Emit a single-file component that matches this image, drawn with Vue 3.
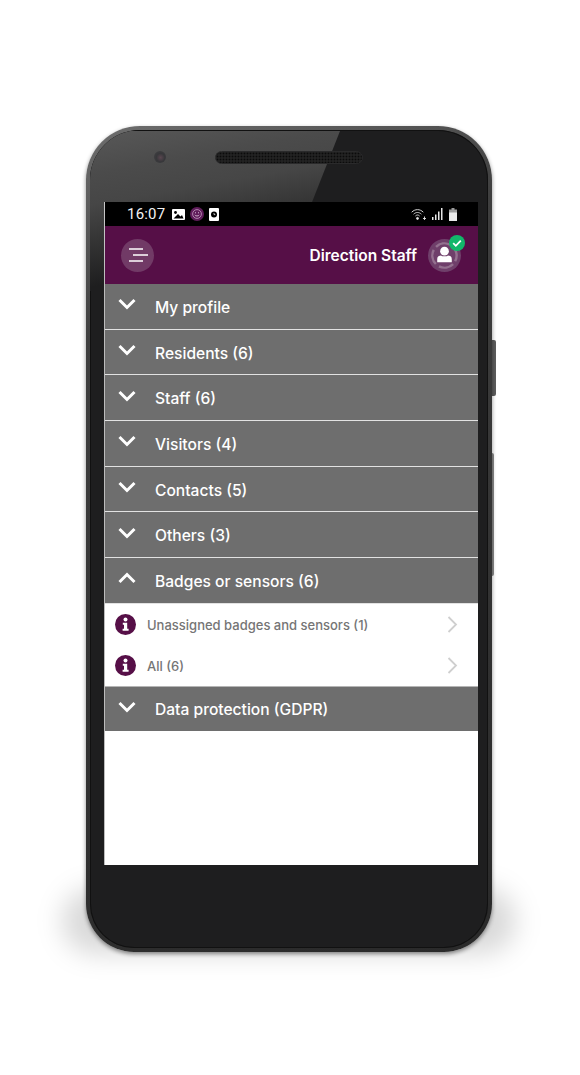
<script setup>
const topRows = ['My profile', 'Residents (6)', 'Staff (6)', 'Visitors (4)', 'Contacts (5)', 'Others (3)']
const subRows = ['Unassigned badges and sensors (1)', 'All (6)']
</script>

<template>
  <main class="stage">
    <div class="device">
      <span class="key key-power"></span>
      <span class="key key-volume"></span>
      <div class="phone">
        <div class="body">
          <span class="gloss"></span>
          <div class="bezel-top">
            <span class="camera"></span>
            <span class="speaker"></span>
          </div>
          <div class="screen">
            <div class="status">
              <span class="clock">16:07</span>
              <svg class="note" width="13" height="11" viewBox="0 0 13 11"><rect width="13" height="11" rx="1" fill="#fff"/><circle cx="3.500" cy="3.500" r="1.400"/><path d="M1.500 9.500 6 5l2.500 2.500L10 6l1.500 3.500z"/></svg>
              <svg class="note" width="14" height="14" viewBox="0 0 14 14"><circle cx="7" cy="7" r="7" fill="#5f1c5a"/><circle cx="7" cy="7" r="4.400" fill="none" stroke="#b98db5" stroke-width=".9"/><path d="M4.800 8c.8 1.300 3.600 1.300 4.400 0" fill="none" stroke="#d9bdd6" stroke-width=".9"/><path d="M5 5.800h1M8 5.800h1" stroke="#d9bdd6"/></svg>
              <svg class="note" width="10" height="13" viewBox="0 0 10 13"><rect width="10" height="13" rx="1" fill="#fff"/><circle cx="5" cy="6.500" r="3" fill="#000"/><path d="M5 5v1.600h1.300" stroke="#fff" stroke-width=".7" fill="none"/></svg>
              <span class="grow"></span>
              <svg width="16" height="13" viewBox="0 0 16 13" fill="none" stroke="#e8e8e8" stroke-width=".9"><path d="M.7 4.200C4 .8 9 .8 12.300 4.200M2.600 6.200c2.300-2.300 5.500-2.300 7.800 0M4.400 8c1.300-1.300 2.900-1.300 4.200 0"/><circle cx="6.500" cy="10.400" r="1" fill="#e8e8e8"/><path d="M13.500 8.500v3.500M12 10.500h3"/></svg>
              <svg class="signal" width="12" height="12" viewBox="0 0 12 12" fill="#e8e8e8"><rect x="0" y="9" width="1.500" height="3"/><rect x="3" y="6.500" width="1.500" height="5.500"/><rect x="6" y="3.500" width="1.500" height="8.500"/><rect x="9" y="0" width="1.500" height="12"/></svg>
              <svg class="battery" width="8" height="13" viewBox="0 0 8 13"><path d="M2.500 0h3v1.500H8V13H0V1.500h2.500z" fill="#9b9b9b"/><rect y="4.500" width="8" height="8.500" fill="#e9e9e9"/></svg>
            </div>
            <header class="bar">
              <button class="menu" aria-label="Menu">
                <svg width="20" height="16" viewBox="0 0 20 16" stroke="#fff" stroke-width="1.600"><path d="M1 2h14M5 8h15M1 14h14"/></svg>
              </button>
              <span class="user">Direction Staff</span>
              <span class="avatar">
                <svg width="33" height="33" viewBox="0 0 34 34">
                  <circle cx="17" cy="17" r="17" fill="#6f3f6a"/>
                  <circle cx="17" cy="17" r="12.500" fill="none" stroke="#94718f" stroke-width="2.500" stroke-dasharray="15.600 4" transform="rotate(45 17 17)"/>
                  <circle cx="17" cy="12.500" r="4.500" fill="#fff"/>
                  <path d="M9.500 24v-3.500c0-2.500 2-3.500 4-3.500 1 1.200 6 1.200 7 0 2 0 4 1 4 3.500V24z" fill="#fff"/>
                </svg>
                <svg class="check" width="16" height="16" viewBox="0 0 16 16"><circle cx="8" cy="8" r="8" fill="#12b76a"/><path d="M4.200 8.200l2.600 2.600 5-5.200" fill="none" stroke="#fff" stroke-width="1.800"/></svg>
              </span>
            </header>
            <div class="row" v-for="r in topRows" :key="r">
              <svg class="chev" width="20" height="12" viewBox="0 0 20 12"><path d="M2.500 2l7.500 7.500L17.500 2" fill="none" stroke="#fff" stroke-width="3"/></svg>
              <span class="label">{{ r }}</span>
            </div>
            <div class="row">
              <svg class="chev" width="20" height="12" viewBox="0 0 20 12"><path d="M2.500 10L10 2.500 17.500 10" fill="none" stroke="#fff" stroke-width="3"/></svg>
              <span class="label">Badges or sensors (6)</span>
            </div>
            <div class="subs">
              <div class="sub" v-for="s in subRows" :key="s">
                <svg class="info" width="21" height="21" viewBox="0 0 21 21"><circle cx="10.500" cy="10.500" r="10.500" fill="#560f47"/><circle cx="10.500" cy="5.500" r="2" fill="#fff"/><path d="M7.800 8.800h4.400v6h1.400v2H7.600v-2H9v-4H7.800z" fill="#fff"/></svg>
                <span class="sub-text">{{ s }}</span>
                <svg class="next" width="11" height="17" viewBox="0 0 11 17"><path d="M1.500 1l7.500 7.500L1.500 16" fill="none" stroke="#cfcfcf" stroke-width="1.800"/></svg>
              </div>
            </div>
            <div class="row last">
              <svg class="chev" width="20" height="12" viewBox="0 0 20 12"><path d="M2.500 2l7.500 7.500L17.500 2" fill="none" stroke="#fff" stroke-width="3"/></svg>
              <span class="label">Data protection (GDPR)</span>
            </div>
          </div>
        </div>
      </div>
    </div>
  </main>
</template>

<style>
html, body { margin: 0; background: #fff; }
</style>

<style scoped>
.stage {
  width: 580px;
  height: 1075px;
  padding: 126px 0 0 86px;
  box-sizing: border-box;
  overflow: hidden;
  background: #fff;
  font-family: Inter, "Noto Sans", sans-serif;
}
.device {
  position: relative;
  width: 406px;
  height: 826px;
}
.device::before {
  content: "";
  position: absolute;
  left: -24px;
  right: -24px;
  bottom: -2px;
  height: 66px;
  border-radius: 40px;
  background: rgba(0, 0, 0, .15);
  filter: blur(13px);
}
.key {
  position: absolute;
  background: #5d5d5d;
  border-radius: 0 2px 2px 0;
}
.key-power { left: 405px; top: 214px; width: 5px; height: 56px; }
.key-volume { left: 405px; top: 327px; width: 3px; height: 123px; background: #8a8a8a; }
.phone {
  position: relative;
  height: 100%;
  box-sizing: border-box;
  padding: 4px;
  border-radius: 54px 54px 48px 48px;
  background: linear-gradient(160deg, #6e6e6e 0, #3f3f3f 22%, #333 60%, #2a2a2a 100%);
  box-shadow: 0 2px 4px rgba(0, 0, 0, .45);
}
.body {
  position: relative;
  height: 100%;
  border-radius: 50px 50px 44px 44px;
  background: #1e1e1f;
  box-shadow: inset 0 0 0 1px #111;
  overflow: hidden;
}
.gloss {
  position: absolute;
  left: 0;
  top: 1px;
  width: 260px;
  height: 160px;
  background: linear-gradient(170deg, #585858 0, #4b4b4b 21%, #464646 36%, #333 55%, #1e1e1f 76%);
  clip-path: polygon(0 0, 250px 0, 187px 160px, 0 160px);
}
.bezel-top {
  position: relative;
  height: 72px;
}
.camera {
  position: absolute;
  left: 64px;
  top: 21px;
  width: 12px;
  height: 12px;
  border-radius: 50%;
  background: radial-gradient(circle at 55% 55%, #5a4650 0, #37373a 45%, #434345 100%);
}
.speaker {
  position: absolute;
  left: 125px;
  top: 21px;
  width: 148px;
  height: 13px;
  border-radius: 7px;
  box-sizing: border-box;
  border: 1px solid #2a2a2b;
  background: radial-gradient(circle, #0b0b0b 0.8px, #222 1.1px) 0 0 / 3px 3px;
}
.screen {
  position: relative;
  width: 373px;
  height: 663px;
  margin-left: 15px;
  background: #fff;
  box-shadow: -1px 0 0 rgba(255, 255, 255, .7);
  overflow: hidden;
}
.status {
  height: 24px;
  padding: 0 21px 0 22px;
  box-sizing: border-box;
  display: flex;
  align-items: center;
  gap: 5px;
  background: #000;
}
.clock {
  margin-right: 2px;
  color: #f2f2f2;
  font: 400 15px Roboto, sans-serif;
  letter-spacing: .2px;
}
.note { flex: none; }
.grow { flex: 1; }
.bar {
  height: 58px;
  padding: 0 17px 0 16px;
  box-sizing: border-box;
  display: flex;
  align-items: center;
  background: #560f47;
}
.menu {
  width: 33px;
  height: 33px;
  padding: 0;
  border: 0;
  border-radius: 50%;
  display: flex;
  align-items: center;
  justify-content: center;
  background: #713a66;
}
.user {
  margin-left: auto;
  margin-right: 11px;
  color: #fff;
  font-size: 15.5px;
  font-weight: 600;
}
.avatar {
  position: relative;
  width: 33px;
  height: 33px;
}
.avatar > svg { display: block; }
.avatar .check {
  position: absolute;
  right: -4px;
  top: -4px;
}
.row {
  height: 45.7px;
  box-sizing: border-box;
  padding-left: 12px;
  display: flex;
  align-items: center;
  gap: 18px;
  background: #6e6e6e;
  border-bottom: 1px solid #e2e2e2;
  color: #fff;
  font-size: 15.6px;
  font-weight: 450;
}
.row .chev { margin-top: -4px; flex: none; }
.label { margin-top: 2px; }
.row.last { height: 44px; border-bottom: 0; }
.subs { border-bottom: 1px solid #b5b5b5; }
.sub {
  height: 41px;
  padding: 0 20px 0 10px;
  display: flex;
  align-items: center;
  gap: 11px;
}
.info { flex: none; }
.sub-text {
  flex: 1;
  margin-top: 2px;
  color: #757575;
  font-size: 13px;
  font-weight: 500;
}
.next { flex: none; }
</style>
